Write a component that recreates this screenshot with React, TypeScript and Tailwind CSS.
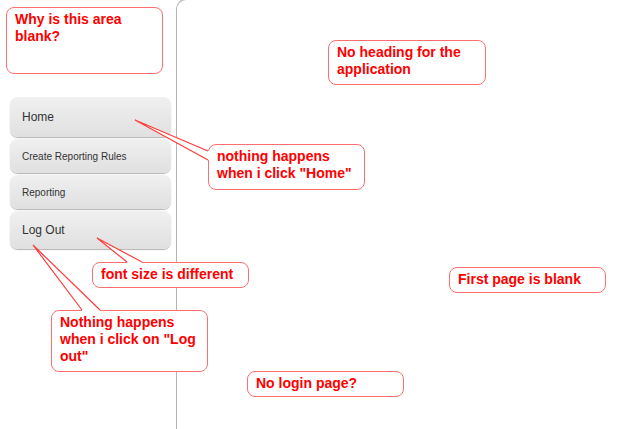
import React from 'react';

interface Note {
  text: React.ReactNode;
  box: string;
}

const notes: Note[] = [
  { text: <>Why is this area<br />blank?</>, box: 'left-[6px] top-[7px] w-[157px] h-[67px]' },
  { text: <>No heading for the<br />application</>, box: 'left-[328px] top-[40px] w-[158px] h-[45px]' },
  { text: <>nothing happens<br />when i click "Home"</>, box: 'left-[208px] top-[144px] w-[157px] h-[46px]' },
  { text: <>font size is different</>, box: 'left-[92px] top-[262px] w-[157px] h-[26px]' },
  { text: <>First page is blank</>, box: 'left-[449px] top-[267px] w-[157px] h-[26px]' },
  { text: <>Nothing happens<br />when i click on "Log<br />out"</>, box: 'left-[51px] top-[310px] w-[157px] h-[62px]' },
  { text: <>No login page?</>, box: 'left-[247px] top-[371px] w-[157px] h-[26px]' },
];

// tail: base point a, tip, base point b, plus a white patch to hide the box edge
const tails = [
  { a: [208, 151], tip: [135, 120], b: [208, 160], patch: 'M208 151 L135 120 L208 160 L211 160 L211 151 Z' },
  { a: [127, 262], tip: [97, 238], b: [142, 262], patch: 'M127 262 L97 238 L142 262 L142 265 L127 265 Z' },
  { a: [82, 310], tip: [33, 245], b: [100, 310], patch: 'M82 310 L33 245 L100 310 L100 313 L82 313 Z' },
];

const navItems = [
  { label: 'Home', cls: 'h-[40px] text-[12px]' },
  { label: 'Create Reporting Rules', cls: 'h-[34px] text-[10px]' },
  { label: 'Reporting', cls: 'h-[34px] text-[10px]' },
  { label: 'Log Out', cls: 'h-[38px] text-[12px]' },
];

export default function App() {
  return (
    <div className="relative flex h-[429px] w-full overflow-hidden bg-white font-['Liberation_Sans',Arial,sans-serif]">
      {/* sidebar */}
      <div className="w-[176px] shrink-0 pl-[10px] pt-[97px]">
        <div className="flex w-[161px] flex-col gap-[2px]">
          {navItems.map((item) => (
            <button
              key={item.label}
              className={`flex items-center rounded-[8px] bg-gradient-to-b from-[#f0f0f0] to-[#e0e0e0] pl-[12px] text-[#333333] shadow-[0_1px_1px_rgba(0,0,0,0.3)] ${item.cls}`}
            >
              {item.label}
            </button>
          ))}
        </div>
      </div>

      {/* main content (blank) */}
      <div className="-mt-px flex-1 rounded-tl-[10px] border-l border-t border-[#b4b4b4]" />

      {/* review annotations */}
      {notes.map((n, i) => (
        <div
          key={i}
          className={`absolute rounded-[8px] border-[1.5px] border-[#ff6e6e] bg-white pl-[8px] pt-[3px] text-[14px] font-bold leading-[17px] text-[#ff0000] ${n.box}`}
        >
          {n.text}
        </div>
      ))}

      <svg className="pointer-events-none absolute left-0 top-0" width="624" height="429" viewBox="0 0 624 429">
        {tails.map((t, i) => (
          <g key={i}>
            <path d={t.patch} fill="white" />
            <polyline
              points={`${t.a[0]},${t.a[1]} ${t.tip[0]},${t.tip[1]} ${t.b[0]},${t.b[1]}`}
              fill="none"
              stroke="#ff3b3b"
              strokeWidth="1.2"
            />
          </g>
        ))}
      </svg>
    </div>
  );
}
